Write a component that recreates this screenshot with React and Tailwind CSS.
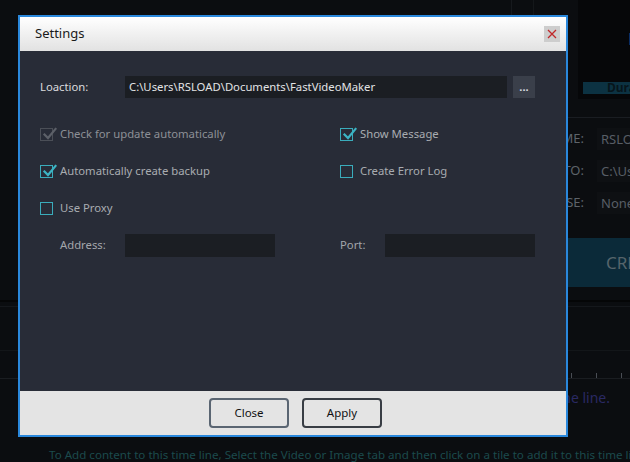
import React from "react";

function Check({ disabled }) {
  const color = disabled ? "#5c6068" : "#3cb4c4";
  return (
    <svg width="16" height="16" viewBox="0 0 16 16" className="absolute left-[1px] top-[-3px]">
      <path d="M2.5 8.5 L6 12 L13.5 3" fill="none" stroke={color} strokeWidth="2.2" strokeLinecap="square" />
    </svg>
  );
}

function Box({ checked, disabled }) {
  return (
    <div
      className={
        "relative w-[13px] h-[13px] shrink-0 border " +
        (disabled ? "border-[#4b4f57]" : "border-[#3aacbb]")
      }
    >
      {checked && <Check disabled={disabled} />}
    </div>
  );
}

function CheckRow({ label, checked, disabled }) {
  return (
    <div className="flex items-center gap-[7px] h-[22px]">
      <Box checked={checked} disabled={disabled} />
      <span className={"text-[11.3px] " + (disabled ? "text-[#8d9096]" : "text-[#a9acb1]")}>{label}</span>
    </div>
  );
}

export default function App() {
  return (
    <div className="relative w-[630px] h-[462px] overflow-hidden bg-[#0b0d10] font-['Noto_Sans',sans-serif]">
      {/* background application */}
      <div className="flex flex-col h-full">
        <div className="flex h-[300px] shrink-0">
          <div className="w-[511px] shrink-0" />
          <div className="flex-1 flex flex-col border-l border-[#16191d]">
            <div className="h-[99px] flex">
              <div className="w-[22px] border-r border-[#14171a]" />
              <div className="w-[44px]" />
              <div className="flex-1 bg-[#060709] flex flex-col justify-between pl-[5px] pb-[5px] pt-[30px] overflow-hidden">
                <span className="pl-[45px] text-[16px] leading-[18px] text-[#1b5a7a] whitespace-nowrap">FastVideo</span>
                <div className="h-[12px] bg-[#0c3242] text-[12px] leading-[12px] text-[#07151b] pl-[24px] font-bold whitespace-nowrap">Duration</div>
              </div>
            </div>
            <div className="h-[18px]" />
            <div className="border-t border-[#1a1d22] pt-[10px] flex flex-col gap-[10px]">
              {[
                ["NAME:", "RSLOAD"],
                ["SAVE TO:", "C:\\Users"],
                ["LICENSE:", "None"],
              ].map(([l, v]) => (
                <div key={l} className="flex items-center h-[22px]">
                  <span className="w-[72px] text-right text-[13px] text-[#5d636a] whitespace-nowrap">{l}</span>
                  <div className="ml-[13px] flex-1 h-[22px] bg-[#0e1013] text-[13px] leading-[22px] text-[#585e66] pl-[4px] whitespace-nowrap overflow-hidden">{v}</div>
                </div>
              ))}
            </div>
            <div className="mt-[24px] h-[49px] ml-[6px] bg-[#0b2a39] flex items-center pl-[88px] text-[17px] text-[#56646b] whitespace-nowrap overflow-hidden">
              CREATE
            </div>
          </div>
        </div>
        <div className="h-[2px] shrink-0 bg-[#050607]" />
        <div className="h-[4px] shrink-0" />
        <div className="h-[44px] shrink-0 border-t border-[#15181c]" />
        <div className="h-[28px] shrink-0 border-t border-[#131619] flex items-end pl-[571px] gap-[24px]">
          <div className="w-px h-[5px] bg-[#4a4e55]" />
          <div className="w-px h-[5px] bg-[#4a4e55]" />
          <div className="w-px h-[5px] bg-[#4a4e55]" />
        </div>
        <div className="h-px shrink-0 bg-[#1a1d21]" />
        <div className="h-[37px] shrink-0 flex items-center justify-end pr-[20px]">
          <span className="text-[14px] text-[#2a2963] whitespace-nowrap">Drag content onto the time line.</span>
        </div>
        <div className="h-[46px] shrink-0 flex items-start pl-[49px] pt-[31px]">
          <span className="text-[11.6px] leading-[16px] text-[#1b4a4c] whitespace-nowrap">
            To Add content to this time line, Select the Video or Image tab and then click on a tile to add it to this time line
          </span>
        </div>
      </div>

      {/* Settings dialog */}
      <div className="absolute left-[18px] top-[15px] w-[550px] h-[422px] border-2 border-[#2a88dc] flex flex-col">
        <div className="h-[34px] shrink-0 bg-gradient-to-b from-white to-[#e2e2e2] flex items-center justify-between pl-[15px] pr-[6px]">
          <span className="text-[13px] text-[#1a1a1a]">Settings</span>
          <div className="w-[16px] h-[16px] bg-[#cdcdcd] flex items-center justify-center">
            <svg width="10" height="10" viewBox="0 0 10 10">
              <path d="M1 1 L9 9 M9 1 L1 9" stroke="#c0282a" strokeWidth="1.3" />
            </svg>
          </div>
        </div>
        <div className="flex-1 bg-[#282c37] pt-[25px] pl-[20px] flex flex-col">
          <div className="flex items-center h-[22px]">
            <span className="w-[85px] text-[11.3px] text-[#dadbdd]">Loaction:</span>
            <div className="w-[382px] h-[22px] bg-[#1b1e23] text-[11.3px] leading-[22px] text-[#e2e3e5] pl-[4px] whitespace-nowrap overflow-hidden">
              C:\Users\RSLOAD\Documents\FastVideoMaker
            </div>
            <div className="ml-[6px] w-[22px] h-[22px] bg-[#3a3f4a] flex items-center justify-center text-[11px] leading-none text-[#dcdde0] font-bold pb-[2px]">
              ...
            </div>
          </div>
          <div className="mt-[25px] grid grid-cols-[300px_1fr] gap-y-[15px]">
            <CheckRow label="Check for update automatically" checked disabled />
            <CheckRow label="Show Message" checked />
            <CheckRow label="Automatically create backup" checked />
            <CheckRow label="Create Error Log" />
            <CheckRow label="Use Proxy" />
            <div />
            <div className="flex items-center h-[23px] pl-[20px]">
              <span className="w-[65px] text-[11.3px] text-[#a3a6ab]">Address:</span>
              <div className="w-[150px] h-[23px] bg-[#1b1e23]" />
            </div>
            <div className="flex items-center h-[23px]">
              <span className="w-[45px] text-[11.3px] text-[#a3a6ab]">Port:</span>
              <div className="w-[150px] h-[23px] bg-[#1b1e23]" />
            </div>
          </div>
        </div>
        <div className="h-[44px] shrink-0 bg-[#e4e4e4] flex items-start pt-[7px] pl-[189px] gap-[13px]">
          <div className="w-[80px] h-[30px] rounded-[4px] border-2 border-[#5a6572] flex items-center justify-center text-[11.5px] text-[#111]">Close</div>
          <div className="w-[80px] h-[30px] rounded-[4px] border-2 border-[#383d44] flex items-center justify-center text-[11.5px] text-[#111]">Apply</div>
        </div>
      </div>
    </div>
  );
}
